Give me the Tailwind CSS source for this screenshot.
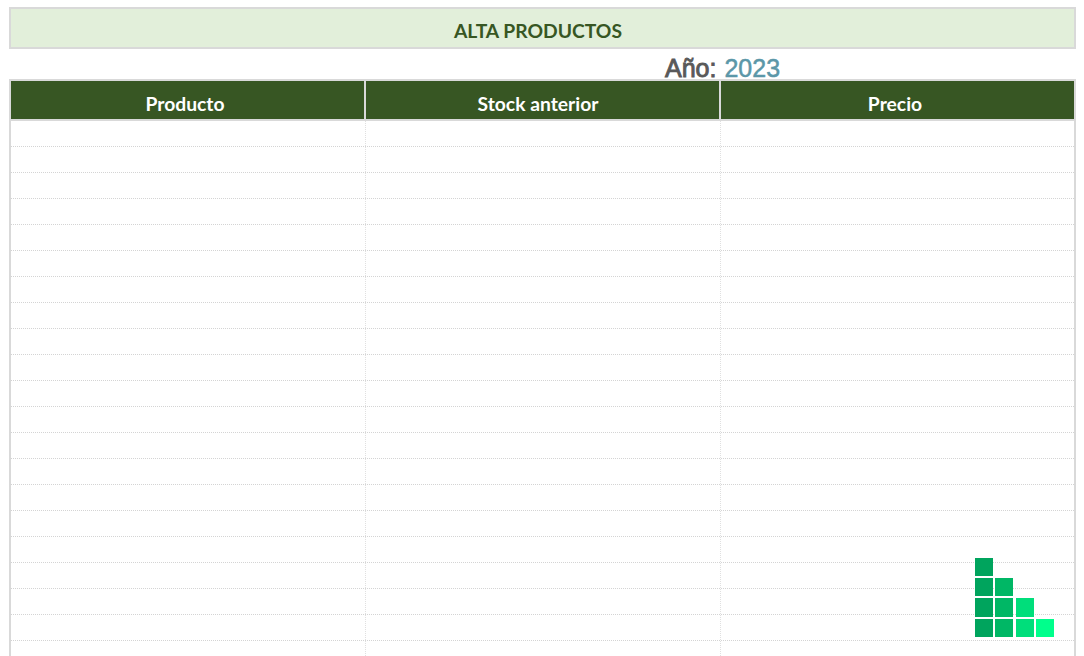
<!DOCTYPE html>
<html lang="es">
  <head>
    <meta charset="UTF-8" />
    <title>Alta productos</title>
    <script src="https://cdn.jsdelivr.net/npm/@tailwindcss/browser@4"></script>
  </head>
  <body class="relative h-[656px] overflow-hidden bg-white font-['Lato',sans-serif]">
    <div class="pl-[9px] pt-[7px] w-[1076px]">
      <!-- Title -->
      <div class="h-[42px] border-2 border-[#d9d9d9] bg-[#e2efda] flex items-center justify-center pr-[9px] pt-[6px] text-[19.3px] font-bold text-[#375623]">
        ALTA PRODUCTOS
      </div>
      <!-- Year -->
      <div class="h-[30px] flex items-end pl-[656px] font-['Liberation_Sans',sans-serif] text-[25px] leading-[24px]">
        <span class="relative top-px text-[#595959] [-webkit-text-stroke-width:0.9px] [-webkit-text-stroke-color:#595959]">Año:</span>
        <span class="relative top-px ml-2 text-[#5b97a8] [-webkit-text-stroke-width:0.5px] [-webkit-text-stroke-color:#5b97a8]">2023</span>
      </div>
      <!-- Table -->
      <div class="border-x-2 border-[#d9d9d9]">
        <div class="grid grid-cols-[355px_355px_353px] h-[42px] border-y-2 border-[#d9d9d9] bg-[#375623] text-white text-[19.3px] font-bold">
          <div class="border-r-2 border-[#d9d9d9] flex items-center justify-center pt-[8px] pr-[5px]">Producto</div>
          <div class="border-r-2 border-[#d9d9d9] flex items-center justify-center pt-[8px] pr-[9px]">Stock anterior</div>
          <div class="flex items-center justify-center pt-[8px] pr-[5px]">Precio</div>
        </div>
        <div id="rows"></div>
      </div>
    </div>
    <!-- Logo -->
    <div class="absolute left-[975px] top-[558px] w-[79px] grid grid-cols-[18px_18px_18px_18px] grid-rows-[18px_18px_19px_18px] gap-x-[2.33px] gap-y-[2px]">
      <div class="bg-[#00a45d]"></div><div></div><div></div><div></div>
      <div class="bg-[#00a45d]"></div><div class="bg-[#00b765]"></div><div></div><div></div>
      <div class="bg-[#00a45d]"></div><div class="bg-[#00b765]"></div><div class="bg-[#00de7b]"></div><div></div>
      <div class="bg-[#00a45d]"></div><div class="bg-[#00b765]"></div><div class="bg-[#00de7b]"></div><div class="bg-[#00ff8c]"></div>
    </div>

    <script>
      // Empty rows of the table
      const rows = document.getElementById("rows");
      for (let i = 0; i < 21; i++) {
        const row = document.createElement("div");
        row.className = "grid grid-cols-[355px_355px_353px] h-[26px] border-b border-dotted border-[#d4d4d4]";
        row.innerHTML =
          '<div class="border-r border-dotted border-[#e0e0e0]"></div>' +
          '<div class="border-r border-dotted border-[#e0e0e0]"></div>' +
          "<div></div>";
        rows.appendChild(row);
      }
    </script>
  </body>
</html>
